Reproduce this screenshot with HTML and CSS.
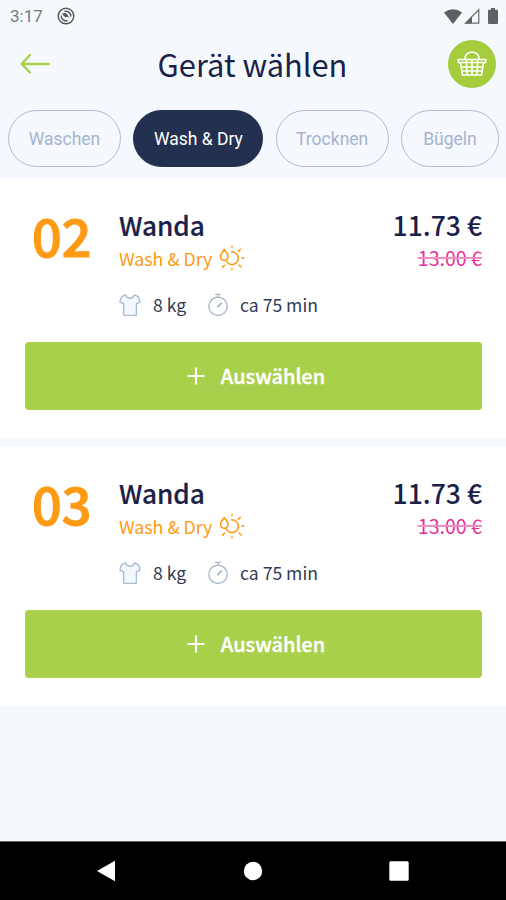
FILE: index.html
```html
<!DOCTYPE html>
<html lang="de">
<head>
<meta charset="utf-8">
<meta name="viewport" content="width=device-width, initial-scale=1">
<title>Gerät wählen</title>
<link rel="stylesheet" href="styles.css">
</head>
<body>
<svg class="defs" width="0" height="0" aria-hidden="true">
  <symbol id="sun" viewBox="0 0 26 26">
    <g fill="none" stroke="#ff9a14" stroke-width="1.600" stroke-linecap="round">
      <path d="M5.300 4.500C3.400 7.200 1.500 9.300 1.500 11.400a3.800 3.800 0 0 0 7.600 0C9.100 9.300 7.200 7.200 5.300 4.500z" stroke-linejoin="round"/>
      <path d="M12.800 6.900a6.300 6.300 0 1 1-5.500 9"/>
      <path d="M13 1.300v.9M13 23.800v.9M23 13h1.800M21.300 4.300l-1.800 1.800M5.500 20.300l-1.800 1.800M20.200 20.200l1.800 1.800"/>
    </g>
  </symbol>
  <symbol id="shirt" viewBox="0 0 22 24">
    <path d="M6.500 1.800 2.800 3.600Q1.500 5.600 1 9l3.600 1.800v10.700q0 .9.900.9h11q.9 0 .9-.9V10.800L21 9q-.5-3.400-1.800-5.400l-3.700-1.800C14.800 4 13.200 5.300 11 5.300S7.200 4 6.500 1.800z" fill="#f3f8fe" stroke="#a9bdd6" stroke-width="1.400" stroke-linejoin="round"/>
  </symbol>
  <symbol id="timer" viewBox="0 0 22 24">
    <g fill="none" stroke="#a3b5cc" stroke-width="1.300" stroke-linecap="round">
      <circle cx="11" cy="13.300" r="9.200"/><path d="M8.500 1.300h5M11 1.500v2.500"/><path d="m10.700 13.600 3.700-3.400" stroke-width="1.800"/>
    </g>
  </symbol>
  <symbol id="plus" viewBox="0 0 18 18">
    <path d="M9 .5v17M.5 9h17" stroke="#fff" stroke-width="2.200" fill="none"/>
  </symbol>
</svg>
<header class="head">
  <div class="status">
    <span class="clock">3:17</span>
    <svg class="sync" viewBox="0 0 18 18"><g fill="none" stroke="#55585c"><circle cx="9" cy="9" r="7.800" stroke-width="1.500"/><path d="M4.200 8.500A4.800 4.800 0 0 0 10.500 13.500M13.800 9.500A4.800 4.800 0 0 0 7.500 4.500" stroke-width="1.500"/></g><path d="M5 7Q9.500 3.500 12.800 11.500L10.500 9.500 8.500 10.500z" fill="#55585c"/></svg>
    <span class="grow"></span>
    <svg class="wifi" viewBox="0 0 18 15"><path d="M0 3.500Q9-3 18 3.500L9 15z" fill="#5d6063"/></svg>
    <svg class="signal" viewBox="0 0 16 16"><path d="M1.500 15.200 14.800 1.800v13.400z" fill="none" stroke="#6a6d70" stroke-width="1.200"/><path d="M1 15.500 8 8.500v7z" fill="#606366"/></svg>
    <svg class="battery" viewBox="0 0 10 16"><path d="M3 0h4v1.800h2.300q.7 0 .7.700V15q0 1-1 1H1q-1 0-1-1V2.500q0-.7.700-.7H3z" fill="#606366"/></svg>
  </div>
  <div class="titlebar">
    <svg class="back" viewBox="0 0 30 22"><path d="M28.500 11H2M10 2 1.700 11l8.300 8.500" fill="none" stroke="#a9d04a" stroke-width="2.400" stroke-linecap="round" stroke-linejoin="round"/></svg>
    <h1 class="title">Gerät wählen</h1>
    <span class="cart"><svg class="basket" viewBox="0 0 32 28"><g fill="none" stroke="#fff" stroke-width="1.600" stroke-linejoin="round"><path d="M9 10V8.500a7 6.500 0 0 1 14 0V10"/><path d="M2.300 9.500h27.400v3H2.300zM4.500 12.500l2 12.500h19l2-12.500M5.200 17h21.600M5.800 21h20.400M10.300 10l.8 15M16 10v15M21.700 10l-.8 15"/></g></svg></span>
  </div>
  <nav class="tabs">
    <span class="tab tab-a">Waschen</span>
    <span class="tab tab-b active">Wash &amp; Dry</span>
    <span class="tab tab-a">Trocknen</span>
    <span class="tab tab-c">Bügeln</span>
  </nav>
</header>
<main class="list">
  <section class="card">
    <div class="top">
      <div class="num">02</div>
      <div class="info">
        <h2 class="name">Wanda</h2>
        <div class="kind"><span>Wash &amp; Dry</span><svg class="sun"><use href="#sun"/></svg></div>
        <div class="meta"><svg class="mi"><use href="#shirt"/></svg><span class="kg">8 kg</span><svg class="mi"><use href="#timer"/></svg><span class="dur">ca 75 min</span></div>
      </div>
      <div class="cost"><div class="price">11.73 €</div><div class="old">13.00 €</div></div>
    </div>
    <div class="btn"><svg class="plus"><use href="#plus"/></svg><span>Auswählen</span></div>
  </section>
  <section class="card">
    <div class="top">
      <div class="num">03</div>
      <div class="info">
        <h2 class="name">Wanda</h2>
        <div class="kind"><span>Wash &amp; Dry</span><svg class="sun"><use href="#sun"/></svg></div>
        <div class="meta"><svg class="mi"><use href="#shirt"/></svg><span class="kg">8 kg</span><svg class="mi"><use href="#timer"/></svg><span class="dur">ca 75 min</span></div>
      </div>
      <div class="cost"><div class="price">11.73 €</div><div class="old">13.00 €</div></div>
    </div>
    <div class="btn"><svg class="plus"><use href="#plus"/></svg><span>Auswählen</span></div>
  </section>
</main>
<footer class="sysnav">
  <svg class="key" viewBox="0 0 22 22"><path d="M2 11 20 .8v20.400z" fill="#fff"/></svg>
  <svg class="key" viewBox="0 0 22 22"><circle cx="11" cy="11" r="9.200" fill="#fff"/></svg>
  <svg class="key" viewBox="0 0 22 22"><rect x="1.300" y="1.300" width="19.400" height="19.400" rx="1.500" fill="#fff"/></svg>
</footer>
</body>
</html>
```
FILE: styles.css
```css
* { box-sizing: border-box; }
body {
  margin: 0;
  height: 900px;
  display: flex;
  flex-direction: column;
  overflow: hidden;
  background: #f5f9fe;
  color: #1a2149;
  font-family: "Noto Sans CJK JP", "Noto Sans", sans-serif;
}
svg { display: block; flex: none; }
h1, h2 { margin: 0; }
.defs { position: absolute; }
.head { height: 179px; flex: none; }
.status {
  height: 32px;
  display: flex;
  align-items: center;
  padding: 0 8px 0 10px;
  font: 17px/32px Roboto, sans-serif;
  color: #75787c;
}
.clock { width: 47px; }
.sync { width: 18px; height: 18px; }
.grow { flex: 1; }
.wifi { width: 18px; height: 15px; margin-right: 2px; }
.signal { width: 16px; height: 16px; margin-right: 8px; }
.battery { width: 10px; height: 16px; }
.titlebar {
  height: 64px;
  display: flex;
  align-items: center;
  justify-content: space-between;
  padding: 0 10px 0 20px;
}
.back { width: 30px; height: 22px; margin-right: 7px; }
.title { font-size: 30.800px; font-weight: 400; line-height: 64px; white-space: nowrap; }
.cart {
  width: 48px;
  height: 48px;
  border-radius: 50%;
  background: #a5cc3c;
  display: flex;
  align-items: center;
  justify-content: center;
}
.basket { width: 32px; height: 28px; }
.tabs { display: flex; justify-content: space-between; padding: 14px 7px 0 8px; }
.tab {
  height: 57px;
  border: 1px solid #b3bad0;
  border-radius: 29px;
  font: 17.500px/56px Roboto, sans-serif;
  color: #a5b4d0;
  text-align: center;
}
.tab-a { width: 113px; }
.tab-b { width: 130px; }
.tab-c { width: 98px; }
.active { background: #24304f; border-color: #24304f; color: #fff; }
.list { display: flex; flex-direction: column; gap: 9px; flex: 1; }
.card { height: 259px; background: #fff; padding: 25px 24px 0 25px; }
.top { display: flex; height: 138px; }
.num { width: 94px; padding: 1px 0 0 7px; font-size: 52px; line-height: 60px; font-weight: 500; -webkit-text-stroke: 1.200px #ff9a14; color: #ff9a14; }
.info { flex: 1; padding-top: 3px; }
.name { font-size: 26.200px; line-height: 36px; font-weight: 500; -webkit-text-stroke: .2px #1a2149; }
.kind { display: flex; align-items: center; font-size: 17.800px; line-height: 30px; color: #ff9a14; }
.kind span { width: 100px; white-space: nowrap; }
.sun { width: 26px; height: 26px; }
.meta { display: flex; align-items: center; margin-top: 17px; font-size: 17.600px; line-height: 30px; color: #343a55; white-space: nowrap; }
.mi { width: 22px; height: 24px; }
.kg { width: 55px; margin-left: 12px; margin-right: -1px; }
.dur { margin-left: 11px; }
.cost { padding-top: 3px; text-align: right; white-space: nowrap; }
.price { font-size: 26.500px; line-height: 36px; font-weight: 500; }
.old { font-size: 19.600px; line-height: 29px; color: #e5309a; text-decoration: line-through; text-decoration-color: #f08dc4; text-decoration-thickness: 2px; }
.btn {
  height: 68px;
  border-radius: 4px;
  background: #a9d04a;
  color: #fff;
  display: flex;
  align-items: center;
  justify-content: center;
  gap: 16px;
  padding-left: 5px;
  font-size: 20px;
  line-height: 30px;
  font-weight: 500;
  -webkit-text-stroke: .4px #fff;
}
.plus { width: 18px; height: 18px; }
.sysnav {
  height: 59px;
  flex: none;
  background: #000;
  border-top: 1px solid #666;
  display: flex;
  justify-content: space-between;
  align-items: center;
  padding: 0 96px 0 95px;
}
.key { width: 22px; height: 22px; }
```
